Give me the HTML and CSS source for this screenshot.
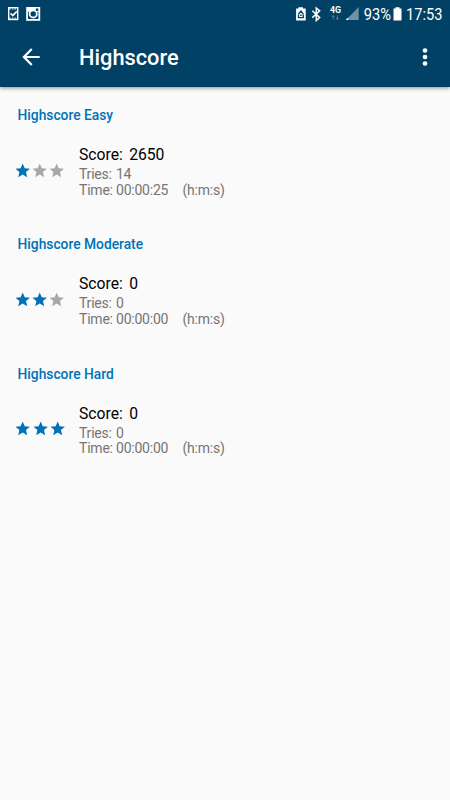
FILE: index.html
```
<!DOCTYPE html>
<html lang="en">

<head>
    <meta charset="UTF-8">
    <meta name="viewport" content="width=device-width, initial-scale=1.0">
    <title>Highscore</title>
    <link rel="stylesheet" href="styles.css">
</head>

<body>
    <svg class="defs" width="0" height="0">
        <symbol id="star" viewBox="0 0 24 24">
            <path d="M12 17.27L18.18 21l-1.64-7.03L22 9.24l-7.19-.61L12 2 9.19 8.63 2 9.24l5.46 4.73L5.82 21z" />
        </symbol>
    </svg>
    <header class="header">
        <div class="status-bar">
            <svg class="status-left" width="42" height="28" viewBox="0 0 42 28">
                <rect x="8.700" y="7.700" width="9" height="11.800" fill="none" stroke="#fff" stroke-width="1.400" />
                <path d="M9.300 9h8M9.300 18.200h8" stroke="#fff" stroke-dasharray="1.600 1" />
                <path d="M10.600 13.300l2.200 2.200 4-4.200" fill="none" stroke="#fff" stroke-width="1.700" />
                <path d="M26.200 7h14v13.800h-14z" fill="#fff" />
                <path d="M28 11.800h10.400v7.200H28z" fill="#004165" />
                <circle cx="33.200" cy="13.900" r="4.500" fill="#fff" />
                <circle cx="33.200" cy="13.900" r="2.700" fill="#004165" />
                <path d="M35.800 8.500h2.600v2.400h-2.600z" fill="#004165" />
            </svg>
            <svg class="status-right" width="68" height="28" viewBox="294 0 68 28">
                <path d="M298.500 7.300h4.500v1.300h2.700v12h-9.600v-12h2.400z" fill="#fff" />
                <path d="M298.400 14.100l2.500-3 2.500 3M298.500 14.500v3.200h4.800v-3.200" fill="none" stroke="#004165" stroke-width="1.300" />
                <path d="M300 15.200h1.900" stroke="#004165" stroke-width="1.200" />
                <path d="M312.300 10.700l7.400 6.900-3.400 3V8l3.400 2.800-7.400 6.800" fill="none" stroke="#fff" stroke-width="1.500" />
                <text class="network" x="330" y="13.300" textLength="11" lengthAdjust="spacingAndGlyphs">4G</text>
                <path d="M333.200 15.500v4M332 17l1.200-1.500 1.200 1.500M337.400 15.500v4M336.200 18l1.200 1.500 1.200-1.500" fill="none" stroke="#5c8399" stroke-width=".9" />
                <path d="M358.700 7v13H346z" fill="#6f92a6" />
                <path d="M348.300 17.500V20H345.600z" fill="#fff" />
            </svg>
            <span class="percent">93%</span>
            <svg class="battery" width="9" height="28" viewBox="0 0 9 28">
                <path d="M2.500 7.200h4v1.300h2v12h-8v-12h2z" fill="#fff" />
            </svg>
            <span class="clock">17:53</span>
        </div>
        <div class="toolbar">
            <svg class="back" width="26" height="26" viewBox="0 0 24 24">
                <path d="M20 11H7.830l5.590-5.590L12 4l-8 8 8 8 1.410-1.410L7.830 13H20v-2z" fill="#fff" />
            </svg>
            <h1 class="title">Highscore</h1>
            <svg class="menu" width="6" height="20" viewBox="0 0 6 20">
                <circle cx="3" cy="3.500" r="2.350" fill="#fff" />
                <circle cx="3" cy="10" r="2.350" fill="#fff" />
                <circle cx="3" cy="16.500" r="2.350" fill="#fff" />
            </svg>
        </div>
    </header>
    <main class="scores">
        <section class="level">
            <h2 class="level-name">Highscore Easy</h2>
            <div class="row">
                <div class="stars">
                    <svg class="star on"><use href="#star" /></svg>
                    <svg class="star"><use href="#star" /></svg>
                    <svg class="star"><use href="#star" /></svg>
                </div>
                <div class="details">
                    <p class="score">Score: <span class="points">2650</span></p>
                    <p>Tries: <span class="value">14</span></p>
                    <p>Time: 00:00:25 <span class="unit">(h:m:s)</span></p>
                </div>
            </div>
        </section>
        <section class="level">
            <h2 class="level-name">Highscore Moderate</h2>
            <div class="row">
                <div class="stars">
                    <svg class="star on"><use href="#star" /></svg>
                    <svg class="star on"><use href="#star" /></svg>
                    <svg class="star"><use href="#star" /></svg>
                </div>
                <div class="details">
                    <p class="score">Score: <span class="points">0</span></p>
                    <p>Tries: <span class="value">0</span></p>
                    <p>Time: 00:00:00 <span class="unit">(h:m:s)</span></p>
                </div>
            </div>
        </section>
        <section class="level">
            <h2 class="level-name">Highscore Hard</h2>
            <div class="row">
                <div class="stars stars-full">
                    <svg class="star on"><use href="#star" /></svg>
                    <svg class="star on"><use href="#star" /></svg>
                    <svg class="star on"><use href="#star" /></svg>
                </div>
                <div class="details">
                    <p class="score">Score: <span class="points">0</span></p>
                    <p>Tries: <span class="value">0</span></p>
                    <p>Time: 00:00:00 <span class="unit">(h:m:s)</span></p>
                </div>
            </div>
        </section>
    </main>
</body>

</html>
```
FILE: styles.css
```
* {
    margin: 0;
    padding: 0;
    box-sizing: border-box;
}

body {
    font-family: Roboto, sans-serif;
    background-color: #fafafa;
    min-height: 100vh;
}

svg {
    display: block;
    flex-shrink: 0;
}

.defs {
    display: none;
}

.header {
    height: 87px;
    background-color: #004165;
    color: #fff;
    box-shadow: 0 1px 4px rgba(0, 0, 0, 0.45);
}

.status-bar {
    display: flex;
    align-items: center;
    height: 28px;
    font-size: 16.8px;
    line-height: 29px;
}

.status-right {
    margin-left: 252px;
}

.network {
    font-size: 8.5px;
    font-weight: 700;
    fill: #fff;
}

/* narrow digits in the status bar */
.percent,
.clock {
    transform: scaleX(0.87);
    transform-origin: left;
    white-space: nowrap;
}

.percent {
    width: 31px;
    padding-left: 2px;
}

.battery {
    flex-shrink: 0;
}

.clock {
    width: 40px;
    margin-left: 4px;
}

.toolbar {
    display: flex;
    align-items: center;
    height: 58px;
    padding: 0 21.6px 0 18px;
}

.title {
    margin-left: 35px;
    padding-top: 1px;
    font-size: 21.8px;
    font-weight: 500;
}

.menu {
    margin-left: auto;
}

.scores {
    padding-top: 18px;
}

.level {
    height: 129.3px;
}

.level-name {
    padding-left: 17.5px;
    font-size: 13.8px;
    line-height: 20px;
    font-weight: 500;
    color: #0072b5;
}

.row {
    display: flex;
    align-items: center;
    height: 55px;
    margin-top: 18px;
}

.stars {
    display: flex;
    width: 79px;
    padding-left: 13.6px;
}

.stars-full {
    padding-left: 14.2px;
}

.star {
    width: 17.4px;
    height: 17.4px;
    fill: #a8a8a8;
}

.star.on {
    fill: #0072b5;
}

.details {
    padding-top: 1.4px;
    font-size: 14px;
    line-height: 15.8px;
    letter-spacing: -0.22px;
    color: #757575;
}

.score {
    font-size: 15.7px;
    line-height: 22px;
    margin-bottom: 1px;
    letter-spacing: 0;
    color: #000;
}

.points {
    margin-left: 2.5px;
}

.value {
    margin-left: 1px;
}

.unit {
    margin-left: 11px;
}
```
